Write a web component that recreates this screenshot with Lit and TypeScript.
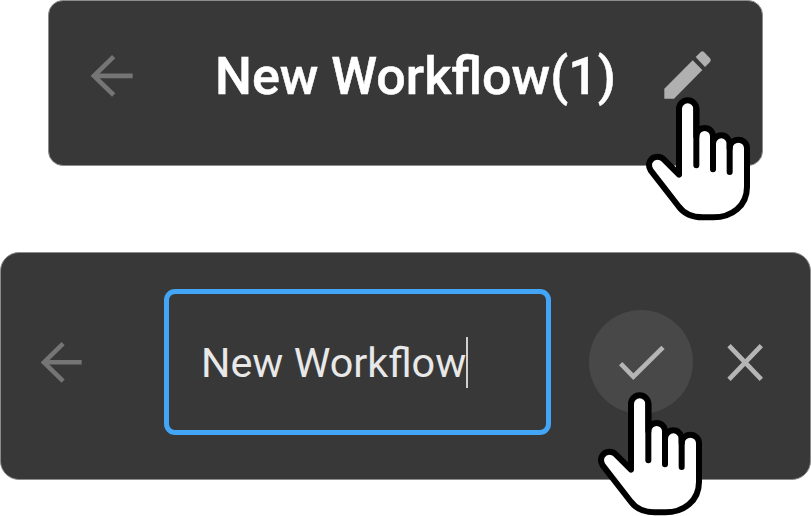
import { LitElement, html, css, svg } from "lit";
import { customElement } from "lit/decorators.js";

const backIcon = html`
  <svg class="back" viewBox="0 0 126 126" aria-hidden="true">
    <path d="M68 5 L9 62.500 L68 120" />
    <path d="M9 62.500 H125" />
  </svg>
`;

const handShape = svg`
  <path
    class="skin"
    d="M147 434 V237 A26 26 0 0 1 199 237 V319 A25 25 0 0 1 249 319 V341 A25 25 0 0 1 299 341 V355 A26 26 0 0 1 351 355 V470 C351 528 305 562 250 562 H218 C185 562 160 549 145 528 L62 421 C50 402 62 380 82 380 C91 380 97 383 102 389 Z"
  />
  <path class="crease" d="M199 237 V406 M249 319 V418 M299 341 V426" />
`;

@customElement("hand-pointer")
export class HandPointer extends LitElement {
  static styles = css`
    :host {
      display: block;
      width: 105px;
      height: 125px;
      pointer-events: none;
    }
    svg {
      display: block;
      width: 105px;
      height: 125px;
    }
    path {
      stroke: #000;
      stroke-width: 18;
      stroke-linejoin: round;
      stroke-linecap: round;
    }
    .skin {
      fill: #fff;
    }
    .crease {
      fill: none;
    }
  `;

  render() {
    return html`<svg viewBox="45 201 315 375" aria-hidden="true">${handShape}</svg>`;
  }
}

@customElement("app-root")
export class AppRoot extends LitElement {
  static styles = css`
    :host {
      display: flex;
      flex-direction: column;
      align-items: flex-start;
      gap: 86px;
      position: relative;
      width: 811px;
      height: 516px;
      overflow: hidden;
      background: #fff;
      font-family: Roboto, sans-serif;
    }
    .bar {
      box-sizing: border-box;
      display: flex;
      flex: none;
      background: #383838;
      border: 1px solid #8c8c8c;
    }
    .view {
      width: 715px;
      height: 165.5px;
      margin-left: 48px;
      border-radius: 15px;
      padding: 50px 50px 0 42px;
    }
    .edit {
      width: 811px;
      height: 228px;
      border-radius: 19px;
      align-items: center;
      padding: 0 46px 6px 39px;
    }
    .edit > * {
      flex: none;
    }
    svg {
      display: block;
      flex: none;
      fill: none;
    }
    .back {
      width: 42px;
      height: 42px;
      stroke: #757575;
      stroke-width: 14;
    }
    .view .back {
      margin-top: 4px;
    }
    .edit .back {
      width: 41px;
      height: 41px;
      margin-left: 0.5px;
      margin-right: 0.5px;
    }
    h1 {
      margin: -4px 0 0 82px;
      width: 400px;
      color: #fff;
      font-size: 52px;
      line-height: 60px;
      font-weight: 500;
      -webkit-text-stroke: 0.5px #fff;
      white-space: nowrap;
    }
    .pencil {
      width: 47px;
      height: 48px;
      margin-left: 49px;
      fill: #b0b0b0;
    }
    .field {
      box-sizing: border-box;
      display: flex;
      align-items: center;
      width: 386.5px;
      height: 146px;
      margin: -1px 0.5px 0 82px;
      padding: 1px 0 0 32px;
      border: 5.5px solid #42a5f5;
      border-radius: 11px;
      color: #e8e8e8;
      font-size: 41.3px;
      line-height: 50px;
      white-space: nowrap;
    }
    .caret {
      flex: none;
      width: 2px;
      height: 51px;
      margin-left: -0.5px;
      background: #d0d0d0;
    }
    .confirm {
      display: flex;
      align-items: center;
      justify-content: center;
      width: 104px;
      height: 104px;
      margin: -2px 0 0 38px;
      border-radius: 50%;
      background: #484848;
    }
    .check {
      width: 46px;
      height: 36px;
      margin: 3px 0 0 2px;
      stroke: #b5b5b5;
      stroke-width: 14;
    }
    .close {
      width: 36px;
      height: 37px;
      margin-left: 34px;
      stroke: #b5b5b5;
      stroke-width: 14;
    }
    hand-pointer {
      position: absolute;
    }
    .on-pencil {
      left: 645px;
      top: 97px;
    }
    .on-check {
      left: 597px;
      top: 392px;
    }
  `;

  render() {
    return html`
      <section class="bar view">
        ${backIcon}
        <h1>New Workflow(1)</h1>
        <svg class="pencil" viewBox="104 64 141 144" aria-hidden="true">
          <path d="M105 207 V177 L190 92 L219 121 L134 207 Z" />
          <path d="M199 82 L214 67 Q219 63 224 67 L242 86 Q246 91 242 97 L227 112 Z" />
        </svg>
      </section>
      <section class="bar edit">
        ${backIcon}
        <div class="field"><span>New Workflow</span><i class="caret"></i></div>
        <div class="confirm">
          <svg class="check" viewBox="118 137 138 108" aria-hidden="true">
            <path d="M123 193 L161 232 L250 144" />
          </svg>
        </div>
        <svg class="close" viewBox="442 133 108 111" aria-hidden="true">
          <path d="M448 138 L545 239 M545 138 L448 239" />
        </svg>
      </section>
      <hand-pointer class="on-pencil"></hand-pointer>
      <hand-pointer class="on-check"></hand-pointer>
    `;
  }
}
